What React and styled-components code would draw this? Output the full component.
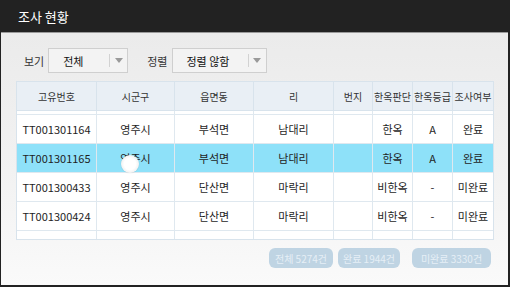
import React, {useRef, useEffect} from 'react';
import styled, {createGlobalStyle} from "styled-components";

const GlobalStyle = createGlobalStyle`
    html, body
    {
        margin: 0;
        padding: 0;
        width: 510px;
        height: 287px;
        overflow: hidden;
        font-family: "Noto Sans CJK KR", "Noto Sans", sans-serif;
    }
    *
    {
        box-sizing: border-box;
    }
`;

const columns = [
    {label: "고유번호", width: 80},
    {label: "시군구", width: 78},
    {label: "읍면동", width: 79},
    {label: "리", width: 80},
    {label: "번지", width: 39},
    {label: "한옥판단", width: 40},
    {label: "한옥등급", width: 40},
    {label: "조사여부", width: 40},
];

const rows = [
    {cells: ["", "", "", "", "", "", "", ""]},
    {cells: ["TT001301164", "영주시", "부석면", "남대리", "", "한옥", "A", "완료"]},
    {cells: ["TT001301165", "영주시", "부석면", "남대리", "", "한옥", "A", "완료"], selected: true},
    {cells: ["TT001300433", "영주시", "단산면", "마락리", "", "비한옥", "-", "미완료"]},
    {cells: ["TT001300424", "영주시", "단산면", "마락리", "", "비한옥", "-", "미완료"]},
    {cells: ["", "", "", "", "", "", "", ""]},
];

const counts = [
    {text: "전체 5274건", width: 64},
    {text: "완료 1944건", width: 62},
    {text: "미완료 3330건", width: 79},
];

const gridTemplate = columns.map(c => `${c.width}px`).join(" ");

function App()
{
    const bodyRef = useRef(null);

    useEffect(() => {
        // list is scrolled a little, the first row is mostly hidden
        if(bodyRef.current)
        {
            bodyRef.current.scrollTop = 25;
        }
    }, []);

    return (
        <>
            <GlobalStyle/>
            <Screen>
                <TitleBar>조사 현황</TitleBar>
                <Body>
                    <Filters>
                        <Label>보기</Label>
                        <Select $width={80}>
                            <span>전체</span>
                            <Arrow/>
                        </Select>
                        <Label>정렬</Label>
                        <Select $width={95}>
                            <span>정렬 않함</span>
                            <Arrow/>
                        </Select>
                    </Filters>
                    <Table>
                        <HeadRow>
                            {columns.map(c => <HeadCell key={c.label}>{c.label}</HeadCell>)}
                        </HeadRow>
                        <RowsArea ref={bodyRef}>
                            {rows.map((r, i) => (
                                <Row key={i} $selected={r.selected}>
                                    {r.cells.map((v, j) => <Cell key={j}>{v}</Cell>)}
                                </Row>
                            ))}
                            <Touch/>
                        </RowsArea>
                    </Table>
                    <Summary>
                        {counts.map(c => <CountButton key={c.text} $width={c.width}>{c.text}</CountButton>)}
                    </Summary>
                </Body>
            </Screen>
        </>
    );
}

const Screen = styled.div`
    width: 510px;
    height: 287px;
    display: flex;
    flex-direction: column;
    background: #222222;
    padding: 0 2px 2px 1px;
`;

const TitleBar = styled.div`
    height: 32px;
    flex-shrink: 0;
    display: flex;
    align-items: center;
    padding-left: 17px;
    color: #ffffff;
    font-size: 13px;
    background: #222222;
`;

const Body = styled.div`
    flex: 1;
    display: flex;
    flex-direction: column;
    background: linear-gradient(#ebebeb, #f2f2f2 55%, #fafafa);
    border-top: 1px solid #9a9a9a;
    padding: 15px 13px 0 15px;
`;

const Filters = styled.div`
    display: flex;
    align-items: center;
    height: 25px;
`;

const Label = styled.span`
    font-size: 11px;
    color: #333333;
    margin: 0 4px 0 8px;

    &:not(:first-child)
    {
        margin-left: 19px;
    }
`;

const Select = styled.div`
    width: ${p => p.$width}px;
    height: 25px;
    display: flex;
    align-items: center;
    justify-content: space-between;
    background: #f3f3f3;
    border: 1px solid #cfcfcf;
    font-size: 11px;
    color: #111111;
    padding-left: 14px;
`;

const Arrow = styled.div`
    width: 18px;
    height: 13px;
    border-left: 1px solid #d2d2d2;
    display: flex;
    align-items: center;
    justify-content: center;

    &::after
    {
        content: "";
        border-left: 4px solid transparent;
        border-right: 4px solid transparent;
        border-top: 5px solid #9a9a9a;
    }
`;

const Table = styled.div`
    margin-top: 8px;
    width: 478px;
    border: 1px solid #d8e3ec;
    background: #ffffff;
`;

const HeadRow = styled.div`
    display: grid;
    grid-template-columns: ${gridTemplate};
    height: 29px;
    background: #e9eff5;
    border-bottom: 1px solid #d8e3ec;
`;

const HeadCell = styled.div`
    display: flex;
    align-items: center;
    justify-content: center;
    font-size: 10px;
    color: #333333;
    border-right: 1px solid #d8e3ec;
    white-space: nowrap;

    &:last-child
    {
        border-right: none;
    }
`;

const RowsArea = styled.div`
    position: relative;
    height: 128px;
    overflow: hidden;
`;

const Row = styled.div`
    display: grid;
    grid-template-columns: ${gridTemplate};
    height: 29px;
    background: ${p => p.$selected ? "#8ee1f9" : "#ffffff"};
    border-bottom: 1px solid #dfe8ef;
`;

const Cell = styled.div`
    display: flex;
    align-items: center;
    justify-content: center;
    font-size: 11px;
    color: #1e1e1e;
    border-right: 1px solid #dfe8ef;
    white-space: nowrap;

    &:last-child
    {
        border-right: none;
    }
`;

const Touch = styled.div`
    position: absolute;
    left: 104px;
    top: 69px;
    width: 18px;
    height: 18px;
    border-radius: 50%;
    background: radial-gradient(circle, #ffffff 45%, #eeeeee 75%, #c9c9c9 100%);
    box-shadow: 0 0 1px rgba(0, 0, 0, 0.25);
`;

const Summary = styled.div`
    display: flex;
    justify-content: flex-end;
    gap: 5px;
    margin-top: 8px;
    padding-right: 4px;

    & > :last-child
    {
        margin-left: 7px;
    }
`;

const CountButton = styled.div`
    width: ${p => p.$width}px;
    height: 20px;
    display: flex;
    align-items: center;
    justify-content: center;
    border-radius: 6px;
    background: #bfd4e3;
    color: #e6eff6;
    font-size: 10px;
    white-space: nowrap;
`;

export default App;
